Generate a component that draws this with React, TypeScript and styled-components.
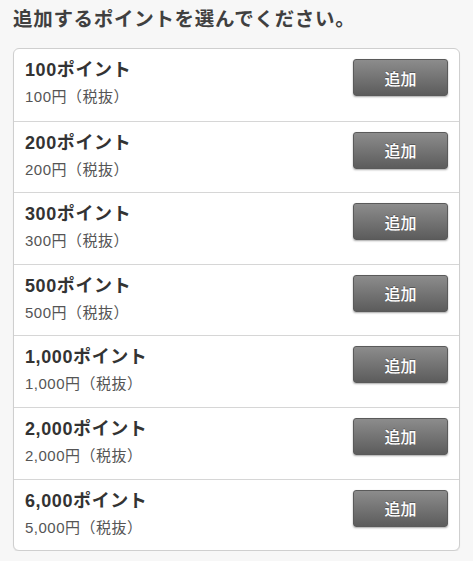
import React from "react";
import styled, { createGlobalStyle } from "styled-components";

const Global = createGlobalStyle`
  html, body { margin: 0; padding: 0; background: #f7f7f7; }
  body { font-family: "Liberation Sans", "Noto Sans CJK JP", sans-serif; color: #333; }
`;

const Page = styled.div`
  padding: 5px 13px 0 13px;
`;

const Title = styled.h1`
  margin: 0 0 15px 0;
  line-height: 28px;
  font-size: 19.5px;
  font-weight: 700;
  color: #404040;
  letter-spacing: 0.7px;
`;

const Card = styled.div`
  background: #fff;
  border: 1px solid #cfcfcf;
  border-radius: 6px;
  box-shadow: 0 1px 1px rgba(0,0,0,0.08);
  overflow: hidden;
`;

const Row = styled.div`
  box-sizing: border-box;
  height: 71.6px;
  display: flex;
  align-items: flex-start;
  justify-content: space-between;
  padding: 9px 11px 0 11px;
  & + & { border-top: 1px solid #d6d6d6; }
`;

const Info = styled.div`
  display: flex;
  flex-direction: column;
  gap: 5px;
`;

const Name = styled.div`
  font-size: 18px;
  font-weight: 700;
  color: #333;
  line-height: 24px;
  letter-spacing: 0.6px;
`;

const Price = styled.div`
  font-size: 15px;
  color: #555;
  line-height: 20px;
  letter-spacing: 0.5px;
`;

const AddButton = styled.button`
  margin-top: 1px;
  width: 95px;
  height: 37px;
  border: 1px solid #5a5a5a;
  border-radius: 3px;
  background: linear-gradient(#8c8c8c, #5c5c5c);
  color: #fff;
  font-family: "Noto Sans CJK JP", sans-serif;
  font-size: 16px;
  font-weight: 500;
  box-shadow: 0 1px 2px rgba(0,0,0,0.35);
  text-shadow: 0 -1px 0 rgba(0,0,0,0.3);
  cursor: pointer;
  padding: 0;
`;

const items = [
  ["100ポイント", "100円（税抜）"],
  ["200ポイント", "200円（税抜）"],
  ["300ポイント", "300円（税抜）"],
  ["500ポイント", "500円（税抜）"],
  ["1,000ポイント", "1,000円（税抜）"],
  ["2,000ポイント", "2,000円（税抜）"],
  ["6,000ポイント", "5,000円（税抜）"],
];

export default function App() {
  return (
    <>
      <Global />
      <Page>
        <Title>追加するポイントを選んでください。</Title>
        <Card>
          {items.map(([n, p]) => (
            <Row key={n}>
              <Info>
                <Name>{n}</Name>
                <Price>{p}</Price>
              </Info>
              <AddButton>追加</AddButton>
            </Row>
          ))}
        </Card>
      </Page>
    </>
  );
}
